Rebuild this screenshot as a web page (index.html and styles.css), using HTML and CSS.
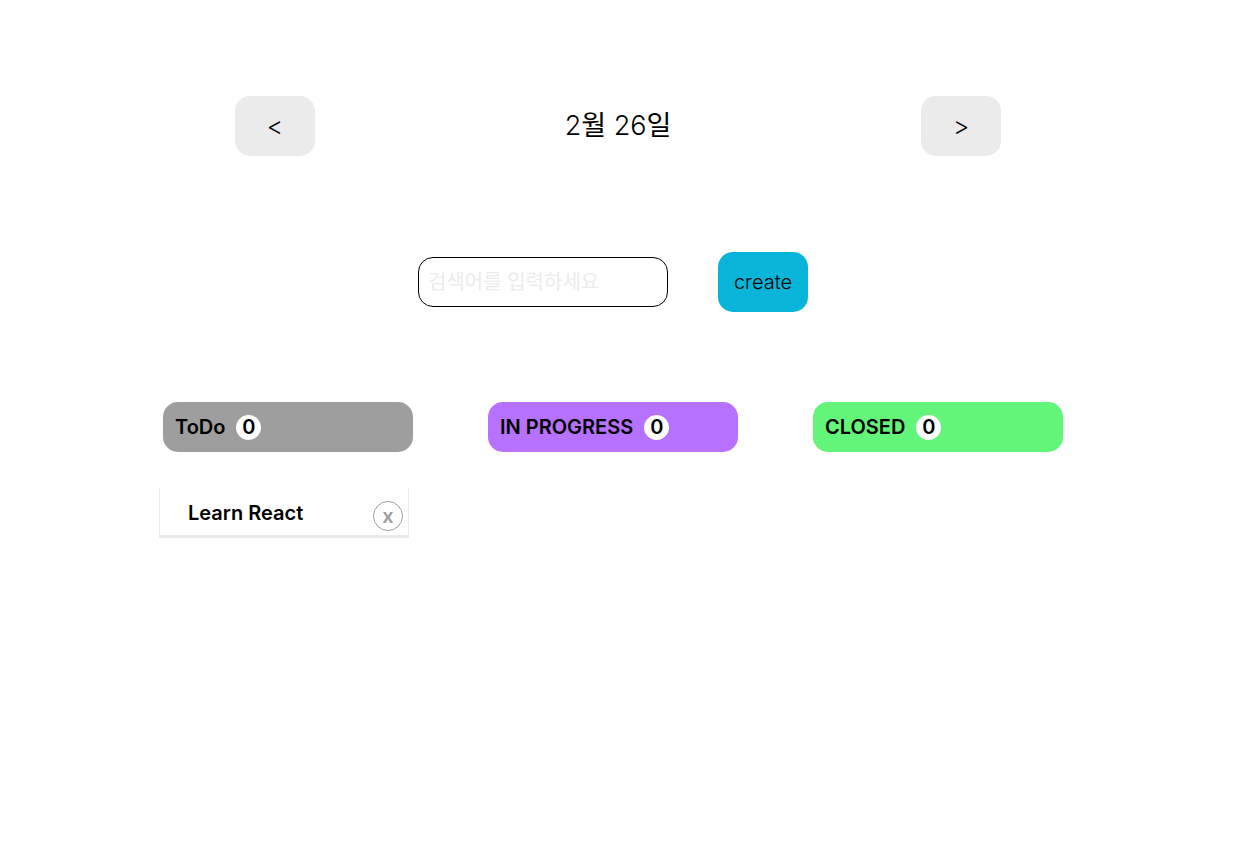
FILE: index.html
```html
<!DOCTYPE html>
<html lang="ko">
<head>
<meta charset="utf-8">
<meta name="viewport" content="width=device-width, initial-scale=1">
<title>Todo</title>
<link rel="stylesheet" href="styles.css">
</head>
<body>
<header class="date-nav">
  <button class="nav-button" type="button">&lt;</button>
  <h1 class="date">2<span class="unit">월</span> 26<span class="unit">일</span></h1>
  <button class="nav-button" type="button">&gt;</button>
</header>
<main class="content">
  <form class="toolbar">
    <input class="search" type="text" aria-label="검색어" placeholder="검색어를 입력하세요">
    <button class="create" type="button">create</button>
  </form>
  <div class="board">
    <section class="column">
      <h2 class="column-title todo">ToDo <span class="count">0</span></h2>
      <article class="card">
        <h3 class="card-title">Learn React</h3>
        <button class="remove" type="button">x</button>
      </article>
    </section>
    <section class="column">
      <h2 class="column-title progress">IN PROGRESS <span class="count">0</span></h2>
    </section>
    <section class="column">
      <h2 class="column-title closed">CLOSED <span class="count">0</span></h2>
    </section>
  </div>
</main>
</body>
</html>
```

FILE: styles.css
```css
* {
  box-sizing: border-box;
}

body,
button,
input {
  font-family: Inter, "Noto Sans CJK KR", sans-serif;
  font-weight: 300;
  color: #000;
}

body {
  margin: 0;
  background: #fff;
}

h1,
h2,
h3 {
  margin: 0;
}

button {
  padding: 0;
  border: 0;
  cursor: pointer;
}

.date-nav {
  display: flex;
  align-items: center;
  justify-content: space-between;
  width: 62%;
  min-width: 320px;
  margin: 0 auto;
  padding-top: 96px;
}

.nav-button {
  width: 80px;
  height: 60px;
  border-radius: 15px;
  background: #ebebeb;
  font-size: 25px;
}

.date {
  font-size: 27px;
  font-weight: 300;
  line-height: 34px;
}

.unit {
  font-weight: 400;
}

.content {
  padding: 96px 10px 0 0;
}

.toolbar {
  display: flex;
  align-items: center;
  justify-content: center;
  gap: 50px;
}

.search {
  width: 250px;
  height: 50px;
  padding: 0 9px;
  border: 1px solid #000;
  border-radius: 15px;
  font-size: 20px;
  font-weight: 400;
}

.search::placeholder {
  color: #ebebeb;
  opacity: 1;
}

.create {
  width: 90px;
  height: 60px;
  border-radius: 15px;
  background: #08b5d9;
  font-size: 20px;
}

.board {
  display: flex;
  justify-content: center;
  gap: 67px;
  margin-top: 90px;
}

.column {
  width: 258px;
}

.column-title {
  display: flex;
  align-items: center;
  gap: 11px;
  height: 50px;
  margin: 0 4px;
  padding: 0 12px;
  border-radius: 15px;
  font-size: 20px;
  font-weight: 600;
}

.todo {
  background: #9e9e9e;
}

.progress {
  background: #b771ff;
}

.closed {
  background: #62f579;
}

.count {
  display: grid;
  place-items: center;
  width: 25px;
  height: 25px;
  border-radius: 50%;
  background: #fff;
}

.card {
  display: flex;
  align-items: center;
  justify-content: space-between;
  width: 250px;
  height: 50px;
  margin-top: 36px;
  padding: 2px 5px 0 28px;
  border: solid #ebebeb;
  border-width: 0 1px 3px;
}

.card-title {
  font-size: 20px;
  font-weight: 600;
}

.remove {
  width: 30px;
  height: 30px;
  margin-top: 6px;
  border: 1px solid #9e9e9e;
  border-radius: 50%;
  background: #fff;
  color: #9e9e9e;
  font-size: 20px;
  font-weight: 600;
}
```
